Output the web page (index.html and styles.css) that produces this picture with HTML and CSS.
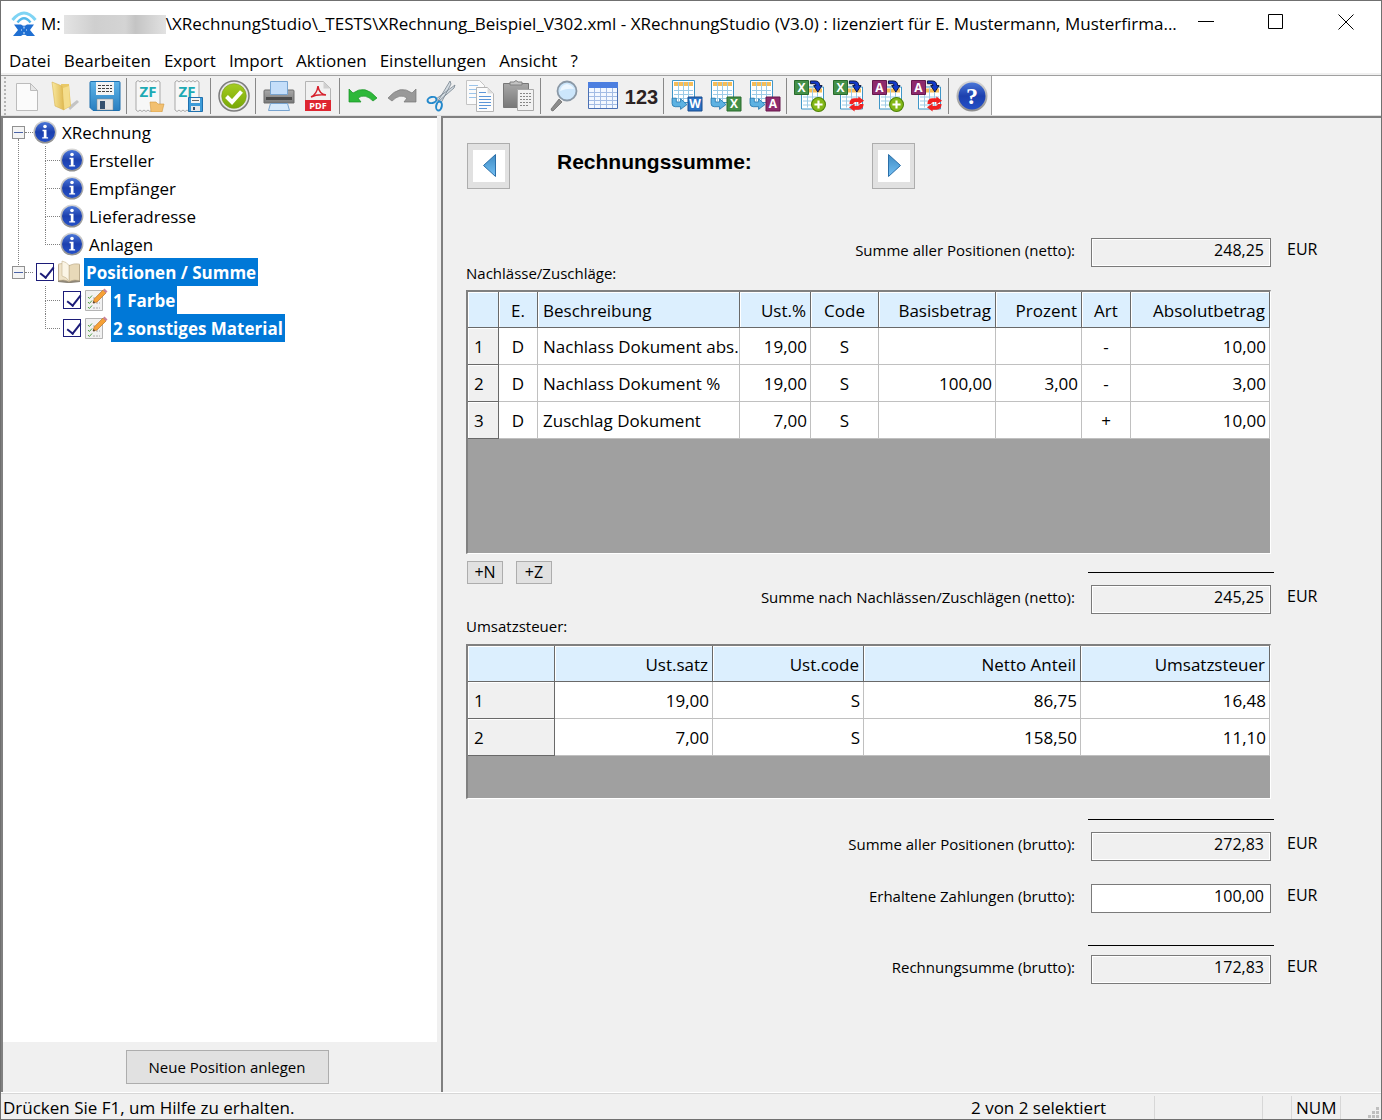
FILE: index.html
```html
<!DOCTYPE html>
<html lang="de">
<head>
	<meta charset="UTF-8">
	<meta name="viewport" content="width=device-width, initial-scale=1.0">
	<title>XRechnungStudio</title>
	<link rel="stylesheet" href="styles.css">
</head>
<body>
	<!-- shared icon parts -->
	<svg class="defs" aria-hidden="true">
		<defs>
			<linearGradient id="gBlue" x1="0" y1="0" x2="0" y2="1"><stop offset="0" stop-color="#5fb4e8"/><stop offset="1" stop-color="#2a7fc0"/></linearGradient>
			<linearGradient id="gNavy" x1="0" y1="0" x2="0" y2="1"><stop offset="0" stop-color="#4a76d8"/><stop offset=".5" stop-color="#1c40ae"/><stop offset="1" stop-color="#2450c8"/></linearGradient>
			<linearGradient id="gFolder" x1="0" y1="0" x2="1" y2="0"><stop offset="0" stop-color="#f9e9a0"/><stop offset="1" stop-color="#dfb850"/></linearGradient>
			<linearGradient id="gGray" x1="0" y1="0" x2="0" y2="1"><stop offset="0" stop-color="#a8a8a8"/><stop offset="1" stop-color="#787878"/></linearGradient>
			<linearGradient id="gRing" x1="0" y1="0" x2="0" y2="1"><stop offset="0" stop-color="#d8d8d8"/><stop offset="1" stop-color="#8c8c8c"/></linearGradient>
			<linearGradient id="gGreen" x1="0" y1="0" x2="0" y2="1"><stop offset="0" stop-color="#a4cc20"/><stop offset="1" stop-color="#78a808"/></linearGradient>
			<linearGradient id="gTri" x1="0" y1="0" x2="0" y2="1"><stop offset="0" stop-color="#3f8cc4"/><stop offset="1" stop-color="#74c0f4"/></linearGradient>
			<symbol id="info" viewBox="0 0 24 24">
				<circle cx="12" cy="12" r="11.5" fill="url(#gRing)"/>
				<circle cx="12" cy="12" r="10" fill="url(#gNavy)"/>
				<circle cx="12" cy="6.5" r="1.8" fill="#fff"/>
				<path d="M9.5 9.800h4v7.400h1.600v1.400H9.200v-1.400h1.600v-6H9.500z" fill="#fff"/>
			</symbol>
			<symbol id="note" viewBox="0 0 24 24">
				<path d="M1.500 2.500h17v20h-17z" fill="#f1f1f1" stroke="#b4b4b4"/>
				<path d="M4 9l1.400 1.500L8 7.500M4 14l1.400 1.500L8 12.500M4 19l1.400 1.500L8 17.500" fill="none" stroke="#52a045"/>
				<path d="M9 10h4M9 15h7M9 20h7" stroke="#aaa" stroke-dasharray="2 1"/>
				<path d="M9 15l1.200-4L19 2l3 3-9 9z" fill="#f6a136" stroke="#b8722a" stroke-width=".7"/>
				<path d="M19 2l1.500-1.500 3 3L22 5z" fill="#c9829a"/>
				<path d="M9 15l.6-2 1.500 1.500z" fill="#333"/>
			</symbol>
			<symbol id="zfDoc" viewBox="0 0 32 32">
				<path d="M2 2l2-1.500L6 2l2-1.500L10 2l2-1.500L14 2l2-1.500L18 2l2-1.500L22 2l2-1.500L26 2v28l-2 1.500-2-1.500-2 1.500-2-1.500-2 1.500-2-1.500-2 1.500-2-1.500-2 1.500L6 30l-2 1.500L2 30z" fill="#f7f7f7" stroke="#a9a9a9"/>
				<text x="14" y="17" class="zf">ZF</text>
			</symbol>
			<symbol id="gridDoc" viewBox="0 0 24 24">
				<path d="M.5.500h22v22H.5z" fill="#fff" stroke="#3f96c8"/>
				<path d="M2 2h19v4H2z" fill="#f5bd58"/>
				<path d="M2 10.500h19M2 14.500h19M2 18.500h19M6.500 2v19M11.500 2v19M16.500 2v19" stroke="#9ccbe6"/>
			</symbol>
			<symbol id="bentArrow" viewBox="0 0 16 12">
				<path d="M1 1h4v3.500h4V1.500L15 7l-6 4.500V9H4Q1 9 1 6z" fill="#5db2e2" stroke="#2478b0" stroke-width=".8"/>
			</symbol>
			<symbol id="inArrow" viewBox="0 0 14 14">
				<path d="M1 1h5q5 0 5 5h2.500L9 13 4.500 6H7q0-2-2-2H1z" fill="#1238c8" stroke="#061238"/>
			</symbol>
			<symbol id="plus" viewBox="0 0 14 14">
				<circle cx="7" cy="7" r="6.500" fill="#84b818" stroke="#4e8208"/>
				<path d="M7 3.200v7.600M3.200 7h7.600" stroke="#fff" stroke-width="2"/>
			</symbol>
			<symbol id="reload" viewBox="0 0 18 16">
				<path d="M1.500 8q0-6 5.500-6h4V0l6 4.500-6 4V6H8Q6 6 5.500 8z" fill="#f02020"/>
				<path d="M16.500 8q0 6-5.500 6H7v2l-6-4.500 6-4V10h3q2 0 2.500-2z" fill="#f02020"/>
			</symbol>
		</defs>
	</svg>

	<div class="window">
		<header class="titlebar">
			<svg class="logo" viewBox="0 0 26 26">
				<path d="M1.500 9Q13-5 24.500 9" fill="none" stroke="#7fd4f4" stroke-width="3"/>
				<path d="M6.500 11.500Q13 3 19.500 11.500" fill="none" stroke="#54b8ea" stroke-width="2.500"/>
				<path d="M3 13.500h7q3 2.500 6 0h7l-4 5.500 5 6h-8q-3-2.500-6 0H2l5-6z" fill="#1f6fd2"/>
				<path d="M13 15.500v2M13 21v2M10 19h1M15 19h1" stroke="#dff0ff"/>
			</svg>
			<h1 class="title">M:<span class="redacted"></span>\XRechnungStudio\_TESTS\XRechnung_Beispiel_V302.xml - XRechnungStudio (V3.0) : lizenziert für E. Mustermann, Musterfirma...</h1>
			<div class="winButtons">
				<button type="button" aria-label="Minimieren"><svg viewBox="0 0 16 16"><path d="M0 7.500h16" stroke="#000"/></svg></button>
				<button type="button" aria-label="Maximieren"><svg viewBox="0 0 16 16"><path d="M.5.500h14v14H.5z" fill="none" stroke="#000"/></svg></button>
				<button type="button" aria-label="Schließen"><svg viewBox="0 0 16 16"><path d="M.5.500l15 15M15.500.500l-15 15" stroke="#000"/></svg></button>
			</div>
		</header>

		<nav class="menu">
			<button type="button">Datei</button>
			<button type="button">Bearbeiten</button>
			<button type="button">Export</button>
			<button type="button">Import</button>
			<button type="button">Aktionen</button>
			<button type="button">Einstellungen</button>
			<button type="button">Ansicht</button>
			<button type="button">?</button>
		</nav>

		<div class="toolbarRow">
			<div class="toolbar">
				<button type="button" aria-label="Neu"><svg viewBox="0 0 32 32"><path d="M5.500 3.500h14l7 7v20h-21z" fill="#fbfbfb" stroke="#bcbcbc"/><path d="M19.500 3.500v7h7z" fill="#e6e6e6" stroke="#bcbcbc"/></svg></button>
				<button type="button" aria-label="Öffnen"><svg viewBox="0 0 32 32"><path d="M18 27l9-7 2 2-9 8z" fill="#c4c4c4"/><path d="M11 4h8l2 22-7 4z" fill="#e9c968"/><path d="M13 8l6-2 1 20-7 4z" fill="#f4dd8c"/><path d="M2 2l10 4 2 24-9-4z" fill="url(#gFolder)" stroke="#d8b450" stroke-width=".6"/></svg></button>
				<button type="button" aria-label="Speichern"><svg viewBox="0 0 32 32"><path d="M2 1.500h28q1 0 1 1v27q0 1-1 1H4l-3-3v-25q0-1 1-1z" fill="url(#gBlue)" stroke="#1d6fae"/><path d="M7 2h18v13H7z" fill="#f4f4f4"/><path d="M9 5.500h14M9 8.500h14M9 11.500h14" stroke="#444" stroke-dasharray="3 1"/><path d="M8 19h16v11H8z" fill="#e4e4e4" stroke="#888" stroke-width=".5"/><path d="M11 21h5v8h-5z" fill="#34506e"/></svg></button>
				<span class="sep"></span>
				<button type="button" aria-label="ZUGFeRD öffnen"><svg viewBox="0 0 32 32"><use href="#zfDoc"/><path d="M16 22h6l2 2h6l-2 8H17z" fill="#f2c070" stroke="#d09840" stroke-width=".6"/></svg></button>
				<button type="button" aria-label="ZUGFeRD speichern"><svg viewBox="0 0 32 32"><use href="#zfDoc"/><path d="M15.500 17.500h14v14h-14z" fill="#3d9bd8" stroke="#1f70ae"/><path d="M18 18h9v5h-9z" fill="#f4f4f4"/><path d="M19 20.500h7" stroke="#666"/><path d="M18 26h9v5h-9z" fill="#e8e8e8"/><path d="M20 27h2v3h-2z" fill="#34506e"/></svg></button>
				<span class="sep"></span>
				<button type="button" aria-label="Prüfen"><svg viewBox="0 0 32 32"><circle cx="16" cy="16" r="15" fill="#e6e6e6" stroke="#7c7c7c" stroke-width="1.500"/><circle cx="16" cy="16" r="12.300" fill="url(#gGreen)" stroke="#7a9a20" stroke-width=".6"/><path d="M8.500 16.500l5.500 5.500L23.500 11.500" fill="none" stroke="#fff" stroke-width="4"/></svg></button>
				<span class="sep"></span>
				<button type="button" aria-label="Drucken"><svg viewBox="0 0 32 32"><path d="M2 10h28q1 0 1 1v12H1V11q0-1 1-1z" fill="url(#gGray)" stroke="#6c6c6c"/><path d="M7.500 1.500h17v13h-17z" fill="#c4defa" stroke="#78a4d0"/><path d="M3 18.500h26" stroke="#4b4b4b" stroke-width="3"/><path d="M7.500 23.500h17l2 7h-21z" fill="#d7eafc" stroke="#78a4d0"/></svg></button>
				<button type="button" aria-label="PDF"><svg viewBox="0 0 32 32"><path d="M3.500 1.500h18l7 7v22h-25z" fill="#f1f1f1" stroke="#b4b4b4"/><path d="M21.500 1.500v7h7z" fill="#d0d0d0"/><path d="M9 17q6-3 7-11q1 8 8 9q-9-1-15 2z" fill="none" stroke="#d6202c" stroke-width="1.500"/><path d="M3 20h26v11H3z" fill="#de2631"/><text x="16" y="29" class="pdf">PDF</text></svg></button>
				<span class="sep"></span>
				<button type="button" aria-label="Rückgängig"><svg viewBox="0 0 32 32"><path d="M2 9l4 4q12-9 24 5l-4 3q-8-8-15-3l3 4H2z" fill="#2eb83a" stroke="#159022" stroke-width=".7"/></svg></button>
				<button type="button" aria-label="Wiederholen"><svg viewBox="0 0 32 32"><path d="M30 9l-4 4Q14 4 2 18l4 3q8-8 15-3l-3 4h12z" fill="#999" stroke="#777" stroke-width=".7"/></svg></button>
				<button type="button" aria-label="Ausschneiden"><svg viewBox="0 0 32 32"><path d="M25 1l1 3-10 19-3-2zM30 5l-1 3-15 13-3-2z" fill="#d4dce2" stroke="#76838e" stroke-width=".8"/><ellipse cx="7" cy="20" rx="4.500" ry="3" transform="rotate(-12 7 20)" fill="none" stroke="#2489cc" stroke-width="2"/><ellipse cx="14" cy="26" rx="2.800" ry="4.500" transform="rotate(12 14 26)" fill="none" stroke="#2489cc" stroke-width="2"/></svg></button>
				<button type="button" aria-label="Kopieren"><svg viewBox="0 0 32 32"><path d="M2.500.500h13l5 5v19h-18z" fill="#fbfbfb" stroke="#c4c4c4"/><path d="M5 5.500h9M5 9.500h7M5 13.500h7M5 17.500h7" stroke="#9cc4ea"/><path d="M12.500 7.500h11l6 6v18h-17z" fill="#fcfcfc" stroke="#b4b4b4"/><path d="M23.500 7.500v6h6z" fill="#ddd"/><path d="M15 12.500h7M15 16.500h12M15 19.500h12M15 22.500h12M15 25.500h12M15 28.500h8" stroke="#5c96d8"/></svg></button>
				<button type="button" aria-label="Einfügen"><svg viewBox="0 0 32 32"><path d="M.5 3.500h25v24H.5z" fill="url(#gGray)" stroke="#777"/><path d="M7 5V2h4q2-3 4 0h4v3z" fill="#c4c4c4" stroke="#808080"/><path d="M14.500 9.500h16v21h-16z" fill="#f2f2f2" stroke="#a8a8a8"/><path d="M17 13.500h11M17 16.500h11M17 19.500h11M17 22.500h11M17 25.500h8" stroke="#888" stroke-dasharray="2 1"/></svg></button>
				<span class="sep"></span>
				<button type="button" aria-label="Suchen"><svg viewBox="0 0 32 32"><path d="M11 19l3 3-9 9q-2 0-2-2z" fill="#8c8c8c" stroke="#555" stroke-width=".6"/><circle cx="19" cy="11" r="9.500" fill="#cce6fb" stroke="#8a98a6" stroke-width="1.800"/><path d="M12 11q1-6 7-7 5 1 7 5-7-1-14 2z" fill="#edf7ff"/></svg></button>
				<button type="button" aria-label="Tabelle"><svg viewBox="0 0 32 32"><path d="M1.500 2.500h29v26h-29z" fill="#f3f8ff" stroke="#4a70b4"/><path d="M1 2h30v6H1z" fill="#4c7fe0"/><path d="M2 12.500h28M2 16.500h28M2 20.500h28M2 24.500h28M7.500 8v20M13.500 8v20M19.500 8v20M25.500 8v20" stroke="#a3bce4"/></svg></button>
				<button type="button" class="digits">123</button>
				<span class="sep"></span>
				<button type="button" aria-label="Nach Word"><svg viewBox="0 0 32 32"><use href="#gridDoc" x="1" y="0" width="24" height="24"/><use href="#bentArrow" x="0" y="17" width="17" height="13"/><path d="M17 17h14v14H17z" fill="#2a72c4" stroke="#184a8c"/><text x="24" y="28" class="badge">W</text></svg></button>
				<button type="button" aria-label="Nach Excel"><svg viewBox="0 0 32 32"><use href="#gridDoc" x="1" y="0" width="24" height="24"/><use href="#bentArrow" x="0" y="17" width="17" height="13"/><path d="M17 17h14v14H17z" fill="#449048" stroke="#286a2c"/><text x="24" y="28" class="badge">X</text></svg></button>
				<button type="button" aria-label="Nach Access"><svg viewBox="0 0 32 32"><use href="#gridDoc" x="1" y="0" width="24" height="24"/><use href="#bentArrow" x="0" y="17" width="17" height="13"/><path d="M17 17h14v14H17z" fill="#8e2a6c" stroke="#66184c"/><text x="24" y="28" class="badge">A</text></svg></button>
				<span class="sep"></span>
				<button type="button" aria-label="Excel hinzufügen"><svg viewBox="0 0 32 32"><use href="#gridDoc" x="7" y="6" width="24" height="25"/><path d="M.5.500h14v14H.5z" fill="#449048" stroke="#286a2c"/><text x="7.500" y="12" class="badge">X</text><use href="#inArrow" x="15" y="0" width="14" height="13"/><use href="#plus" x="17" y="17" width="15" height="15"/></svg></button>
				<button type="button" aria-label="Excel aktualisieren"><svg viewBox="0 0 32 32"><use href="#gridDoc" x="7" y="6" width="24" height="25"/><path d="M.5.500h14v14H.5z" fill="#449048" stroke="#286a2c"/><text x="7.500" y="12" class="badge">X</text><use href="#inArrow" x="15" y="0" width="14" height="13"/><use href="#reload" x="15" y="16" width="17" height="16"/></svg></button>
				<button type="button" aria-label="Access hinzufügen"><svg viewBox="0 0 32 32"><use href="#gridDoc" x="7" y="6" width="24" height="25"/><path d="M.5.500h14v14H.5z" fill="#8e2a6c" stroke="#66184c"/><text x="7.500" y="12" class="badge">A</text><use href="#inArrow" x="15" y="0" width="14" height="13"/><use href="#plus" x="17" y="17" width="15" height="15"/></svg></button>
				<button type="button" aria-label="Access aktualisieren"><svg viewBox="0 0 32 32"><use href="#gridDoc" x="7" y="6" width="24" height="25"/><path d="M.5.500h14v14H.5z" fill="#8e2a6c" stroke="#66184c"/><text x="7.500" y="12" class="badge">A</text><use href="#inArrow" x="15" y="0" width="14" height="13"/><use href="#reload" x="15" y="16" width="17" height="16"/></svg></button>
				<span class="sep"></span>
				<button type="button" aria-label="Hilfe"><svg viewBox="0 0 32 32"><circle cx="16" cy="16" r="15.500" fill="url(#gRing)"/><circle cx="16" cy="16" r="13.500" fill="url(#gNavy)"/><text x="16" y="24" class="help">?</text></svg></button>
			</div>
		</div>

		<main class="panes">
			<section class="left">
				<ul class="tree">
					<li class="branch">
						<div class="node"><button type="button" class="toggle" aria-label="Zuklappen"></button><i class="stub"></i><svg class="ico"><use href="#info"/></svg><span class="text">XRechnung</span></div>
						<ul>
							<li><div class="node"><svg class="ico"><use href="#info"/></svg><span class="text">Ersteller</span></div></li>
							<li><div class="node"><svg class="ico"><use href="#info"/></svg><span class="text">Empfänger</span></div></li>
							<li><div class="node"><svg class="ico"><use href="#info"/></svg><span class="text">Lieferadresse</span></div></li>
							<li><div class="node"><svg class="ico"><use href="#info"/></svg><span class="text">Anlagen</span></div></li>
						</ul>
					</li>
					<li class="branch">
						<div class="node"><button type="button" class="toggle" aria-label="Zuklappen"></button><i class="stub"></i><input type="checkbox" id="pos" checked><svg class="ico" viewBox="0 0 24 24"><path d="M1 5h22v17l-9 1h-4l-9-1z" fill="#8f8778"/><path d="M1.500 4Q7 2 12 5.500v16Q7 19 1.500 20.500z" fill="#efe3c8" stroke="#b8a684" stroke-width=".6"/><path d="M22.500 4Q17 3 12 5.500v16Q17 19 22.500 20.500z" fill="#e8d9b8" stroke="#b8a684" stroke-width=".6"/><path d="M5 1q5 1 7 4.500v16Q10 17 5 16z" fill="#fbf5e6" stroke="#c4b490" stroke-width=".6"/></svg><label class="text" for="pos">Positionen / Summe</label></div>
						<ul>
							<li><div class="node"><input type="checkbox" id="pos1" checked><svg class="ico"><use href="#note"/></svg><label class="text" for="pos1">1 Farbe</label></div></li>
							<li><div class="node"><input type="checkbox" id="pos2" checked><svg class="ico"><use href="#note"/></svg><label class="text" for="pos2">2 sonstiges Material</label></div></li>
						</ul>
					</li>
				</ul>
				<div class="leftFoot">
					<button type="button" class="btn wide">Neue Position anlegen</button>
				</div>
			</section>

			<section class="right">
				<form class="form">
					<div class="pager">
						<button type="button" class="btn step" aria-label="Zurück"><svg viewBox="0 0 32 32"><path d="M22.500 4.500v22L10.500 15.500z" fill="url(#gTri)" stroke="#2a6ea8" stroke-linejoin="round"/></svg></button>
						<h2>Rechnungssumme:</h2>
						<button type="button" class="btn step" aria-label="Weiter"><svg viewBox="0 0 32 32"><path d="M10.500 4.500v22l12-11z" fill="url(#gTri)" stroke="#2a6ea8" stroke-linejoin="round"/></svg></button>
					</div>

					<div class="sum">
						<label for="netto">Summe aller Positionen (netto):</label>
						<input type="text" id="netto" value="248,25" readonly>
						<span>EUR</span>
					</div>

					<div class="caption" id="capN">Nachlässe/Zuschläge:</div>
					<div class="sheet tall">
						<table aria-labelledby="capN">
							<colgroup>
								<col class="w31"><col class="w39"><col class="w202"><col class="w71"><col class="w68"><col class="w117"><col class="w86"><col class="w49"><col>
							</colgroup>
							<thead>
								<tr><th></th><th class="mid">E.</th><th class="txt">Beschreibung</th><th>Ust.%</th><th class="mid">Code</th><th>Basisbetrag</th><th>Prozent</th><th class="mid">Art</th><th>Absolutbetrag</th></tr>
							</thead>
							<tbody>
								<tr><th>1</th><td class="mid">D</td><td class="txt">Nachlass Dokument abs.</td><td>19,00</td><td class="mid">S</td><td></td><td></td><td class="mid">-</td><td>10,00</td></tr>
								<tr><th>2</th><td class="mid">D</td><td class="txt">Nachlass Dokument %</td><td>19,00</td><td class="mid">S</td><td>100,00</td><td>3,00</td><td class="mid">-</td><td>3,00</td></tr>
								<tr><th>3</th><td class="mid">D</td><td class="txt">Zuschlag Dokument</td><td>7,00</td><td class="mid">S</td><td></td><td></td><td class="mid">+</td><td>10,00</td></tr>
							</tbody>
						</table>
					</div>

					<div class="adders">
						<button type="button" class="btn add">+N</button>
						<button type="button" class="btn add">+Z</button>
						<i class="rule"></i>
					</div>
					<div class="sum">
						<label for="nach">Summe nach Nachlässen/Zuschlägen (netto):</label>
						<input type="text" id="nach" value="245,25" readonly>
						<span>EUR</span>
					</div>

					<div class="caption second" id="capU">Umsatzsteuer:</div>
					<div class="sheet short">
						<table aria-labelledby="capU">
							<colgroup>
								<col class="w87"><col class="w158"><col class="w151"><col class="w217"><col>
							</colgroup>
							<thead>
								<tr><th></th><th>Ust.satz</th><th>Ust.code</th><th>Netto Anteil</th><th>Umsatzsteuer</th></tr>
							</thead>
							<tbody>
								<tr><th>1</th><td>19,00</td><td>S</td><td>86,75</td><td>16,48</td></tr>
								<tr><th>2</th><td>7,00</td><td>S</td><td>158,50</td><td>11,10</td></tr>
							</tbody>
						</table>
					</div>

					<i class="rule brutto"></i>
					<div class="sum">
						<label for="brutto">Summe aller Positionen (brutto):</label>
						<input type="text" id="brutto" value="272,83" readonly>
						<span>EUR</span>
					</div>
					<div class="sum paid">
						<label for="paid">Erhaltene Zahlungen (brutto):</label>
						<input type="text" id="paid" value="100,00">
						<span>EUR</span>
					</div>
					<i class="rule total"></i>
					<div class="sum">
						<label for="total">Rechnungsumme (brutto):</label>
						<input type="text" id="total" value="172,83" readonly>
						<span>EUR</span>
					</div>
				</form>
			</section>
		</main>

		<footer class="status">
			<span class="hint">Drücken Sie F1, um Hilfe zu erhalten.</span>
			<span class="count">2 von 2 selektiert</span>
			<span class="cell c1"></span>
			<span class="cell c2"></span>
			<span class="cell num">NUM</span>
			<svg class="grip" viewBox="0 0 12 12"><path d="M8 0h3v3H8zM4 4h3v3H4zM8 4h3v3H8zM0 8h3v3H0zM4 8h3v3H4zM8 8h3v3H8z" fill="#bfbfbf"/></svg>
		</footer>
	</div>
</body>
</html>
```
FILE: styles.css
```css
*{
	box-sizing: border-box;
	margin: 0;
	padding: 0;
}
body{
	font-family: "Open Sans", "Noto Sans", sans-serif;
	font-size: 17px;
	line-height: 24px;
	color: #000;
}
button, input{
	font: inherit;
	color: inherit;
}
button{
	border: 0;
	background: none;
}
.defs{
	position: absolute;
	width: 0;
	height: 0;
}
.window{
	display: flex;
	flex-direction: column;
	min-height: 100vh;
	border: 1px solid #707070;
	background-color: #fff;
}

/* title bar */
.titlebar{
	display: flex;
	align-items: center;
	height: 45px;
	padding-left: 10px;
}
.logo{
	width: 26px;
	height: 26px;
	flex: none;
	margin-right: 4px;
}
.title{
	flex: 1;
	font-size: 17px;
	font-weight: normal;
	white-space: nowrap;
}
.redacted{
	display: inline-block;
	width: 102px;
	height: 19px;
	margin-left: 3px;
	vertical-align: -4px;
	background: linear-gradient(90deg, #e4e4e4, #cfcfcf 30%, #d4d4d4 60%, #c4c4c4 70%, #e2e2e2);
}
.winButtons{
	display: flex;
	margin-left: -10px;
}
.winButtons button{
	width: 70px;
	height: 44px;
}
.winButtons svg{
	width: 16px;
	height: 16px;
}

/* menu */
.menu{
	display: flex;
	gap: 13px;
	height: 30px;
	padding: 0 8px;
	border-bottom: 1px solid #a0a0a0;
	box-shadow: inset 0 -2px #f0f0f0;
}

/* toolbar */
.toolbarRow{
	display: flex;
	height: 40px;
	border-bottom: 1px solid #e0e0e0;
}
.toolbar{
	display: flex;
	align-items: center;
	padding-left: 6px;
	background-color: #f0f0f0;
	background-image: radial-gradient(#b4b4b4 1px, transparent 1px);
	background-size: 4px 4px;
	background-repeat: repeat-y;
	background-position: 2px 0;
	border-right: 1px solid #a0a0a0;
}
.toolbar button{
	width: 39px;
	height: 38px;
}
.toolbar svg{
	display: block;
	width: 32px;
	height: 32px;
	margin: 0 auto;
}
.sep{
	width: 4px;
	height: 36px;
	margin-left: 2px;
	border-left: 1px solid #888;
}
.toolbar .digits{
	font: bold 20px/40px "Liberation Sans", Arial, sans-serif;
	color: #2b2222;
}
.zf{
	font: bold 15px "Open Sans", sans-serif;
	fill: #1eaab4;
	text-anchor: middle;
}
.pdf{
	font: bold 9px "Open Sans", sans-serif;
	fill: #fff;
	text-anchor: middle;
}
.badge{
	font: bold 12px "Open Sans", sans-serif;
	fill: #fff;
	text-anchor: middle;
}
.help{
	font: bold 24px "Liberation Serif", serif;
	fill: #fff;
	text-anchor: middle;
}

/* panes */
.panes{
	flex: 1;
	display: flex;
	gap: 4px;
	background-color: #f0f0f0;
}
.left, .right{
	border-top: 2px solid #808080;
	border-left: 2px solid #808080;
}
.left{
	display: flex;
	flex-direction: column;
	flex: 0 0 436px;
}
.right{
	flex: 1;
	padding: 25px 23px;
}
.tree{
	flex: 1;
	padding-left: 9px;
	background-color: #fff;
	list-style: none;
}
.tree ul{
	list-style: none;
	padding-left: 33px;
}
.node{
	display: flex;
	align-items: center;
	height: 28px;
}
.tree li{
	position: relative;
}
.branch:first-child::before{
	content: "";
	position: absolute;
	left: 6px;
	top: 21px;
	bottom: -7px;
	border-left: 1px dotted #808080;
}
.tree ul li{
	padding-left: 15px;
}
.tree ul li::before{
	content: "";
	position: absolute;
	left: 0;
	top: 0;
	width: 14px;
	height: 14px;
	border-left: 1px dotted #808080;
	border-bottom: 1px dotted #808080;
}
.tree ul li:not(:last-child)::after{
	content: "";
	position: absolute;
	left: 0;
	top: 14px;
	height: 14px;
	border-left: 1px dotted #808080;
}
.toggle{
	width: 13px;
	height: 13px;
	border: 1px solid #919191;
	background: linear-gradient(#4b63a7, #4b63a7) center / 9px 1px no-repeat, #f4f4f4;
}
.stub{
	width: 8px;
	border-top: 1px dotted #808080;
}
.ico{
	width: 24px;
	height: 24px;
	flex: none;
}
.text{
	margin-left: 5px;
	padding-top: 2px;
	white-space: nowrap;
}
.node input{
	appearance: none;
	width: 18px;
	height: 18px;
	margin: 0 3px;
	border: 1px solid #1c1c78;
	background-color: #fff;
}
.node input:checked::after{
	content: "";
	display: block;
	width: 6px;
	height: 12px;
	margin: 0 0 0 6px;
	border: solid #1c1c78;
	border-width: 0 2px 2px 0;
	transform: rotate(38deg);
}
label.text{
	margin-left: 3px;
	padding: 2px 2px 0;
	line-height: 26px;
	font-weight: bold;
	color: #fff;
	background-color: #0078d7;
}
.leftFoot{
	display: flex;
	justify-content: center;
	padding: 8px 0 8px 14px;
}
.btn{
	border: 1px solid #adadad;
	background-color: #e1e1e1;
	font-size: 15px;
}
.wide{
	width: 203px;
	height: 34px;
}

/* form */
.form{
	max-width: 855px;
	font-size: 16px;
}
.pager{
	display: flex;
	gap: 47px;
	padding-left: 1px;
	margin-bottom: 48px;
}
.step{
	width: 43px;
	height: 46px;
}
.step svg{
	display: block;
	width: 32px;
	height: 32px;
	margin: 0 auto;
	background-color: #fff;
}
.pager h2{
	width: 268px;
	font: bold 21px/38px "Liberation Sans", Arial, sans-serif;
}
.sum{
	display: grid;
	grid-template-columns: 1fr 180px 34px;
	column-gap: 16px;
	align-items: center;
	height: 29px;
}
.sum label{
	padding-bottom: 4px;
	text-align: right;
	font-size: 15px;
}
.sum input{
	width: 100%;
	height: 29px;
	padding: 0 6px 4px;
	border: 1px solid #7a7a7a;
	background-color: #fff;
	text-align: right;
}
.sum input:read-only{
	background-color: #f0f0f0;
	box-shadow: inset 0 0 0 1px #fff;
}
.sum span{
	padding-bottom: 6px;
}
.caption{
	margin-bottom: 10px;
	font-size: 15px;
	line-height: 14px;
}
.second{
	margin: 6px 0 11px;
}
.sheet{
	margin-right: 50px;
	border: 1px solid #fff;
	border-top: 2px solid #808080;
	border-left: 2px solid #808080;
	background-color: #a0a0a0;
	font-size: 17px;
}
.tall{
	height: 264px;
}
.short{
	height: 155px;
}
.sheet table{
	width: 100%;
	table-layout: fixed;
	border-collapse: separate;
	border-spacing: 0;
}
.sheet th, .sheet td{
	height: 37px;
	padding: 1px 3px 0;
	border-right: 1px solid #c0c0c0;
	border-bottom: 1px solid #c0c0c0;
	background-color: #fff;
	font-weight: normal;
	text-align: right;
	white-space: nowrap;
	overflow: hidden;
}
.sheet thead th{
	height: 36px;
	padding: 2px 4px 0;
	border-color: #696969;
	background-color: #dceffe;
	box-shadow: inset 1px 1px #fff;
}
.sheet tbody th{
	padding-left: 6px;
	border-color: #696969;
	background-color: #f0f0f0;
	text-align: left;
	box-shadow: inset 1px 1px #fff;
}
.sheet .mid{
	text-align: center;
}
.sheet .txt{
	padding-left: 5px;
	text-align: left;
}
.w31{ width: 31px; }
.w39{ width: 39px; }
.w202{ width: 202px; }
.w71{ width: 71px; }
.w68{ width: 68px; }
.w117{ width: 117px; }
.w86{ width: 86px; }
.w49{ width: 49px; }
.w87{ width: 87px; }
.w158{ width: 158px; }
.w151{ width: 151px; }
.w217{ width: 217px; }
.adders{
	display: flex;
	align-items: center;
	gap: 13px;
	padding: 7px 0 0 1px;
}
.add{
	width: 36px;
	height: 23px;
	font-size: 16px;
	line-height: 21px;
}
.rule{
	display: block;
	width: 186px;
	height: 1px;
	margin-left: auto;
	margin-right: 47px;
	background-color: #000;
}
.brutto{
	margin-top: 20px;
	margin-bottom: 11px;
}
.paid{
	margin-top: 23px;
}
.total{
	margin-top: 33px;
	margin-bottom: 8px;
}

/* status bar */
.status{
	display: flex;
	height: 27px;
	padding: 3px 1px 0 2px;
	border-top: 1px solid #fff;
	box-shadow: inset 0 1px #d7d7d7;
	background-color: #f0f0f0;
}
.hint{
	flex: 1;
}
.count{
	width: 183px;
}
.cell{
	border-left: 1px solid #d7d7d7;
}
.c1{
	width: 108px;
}
.c2{
	width: 29px;
}
.num{
	width: 50px;
	padding-left: 4px;
	border-right: 1px solid #d7d7d7;
}
.grip{
	width: 12px;
	height: 12px;
	margin: 11px 0 0 27px;
}
```
